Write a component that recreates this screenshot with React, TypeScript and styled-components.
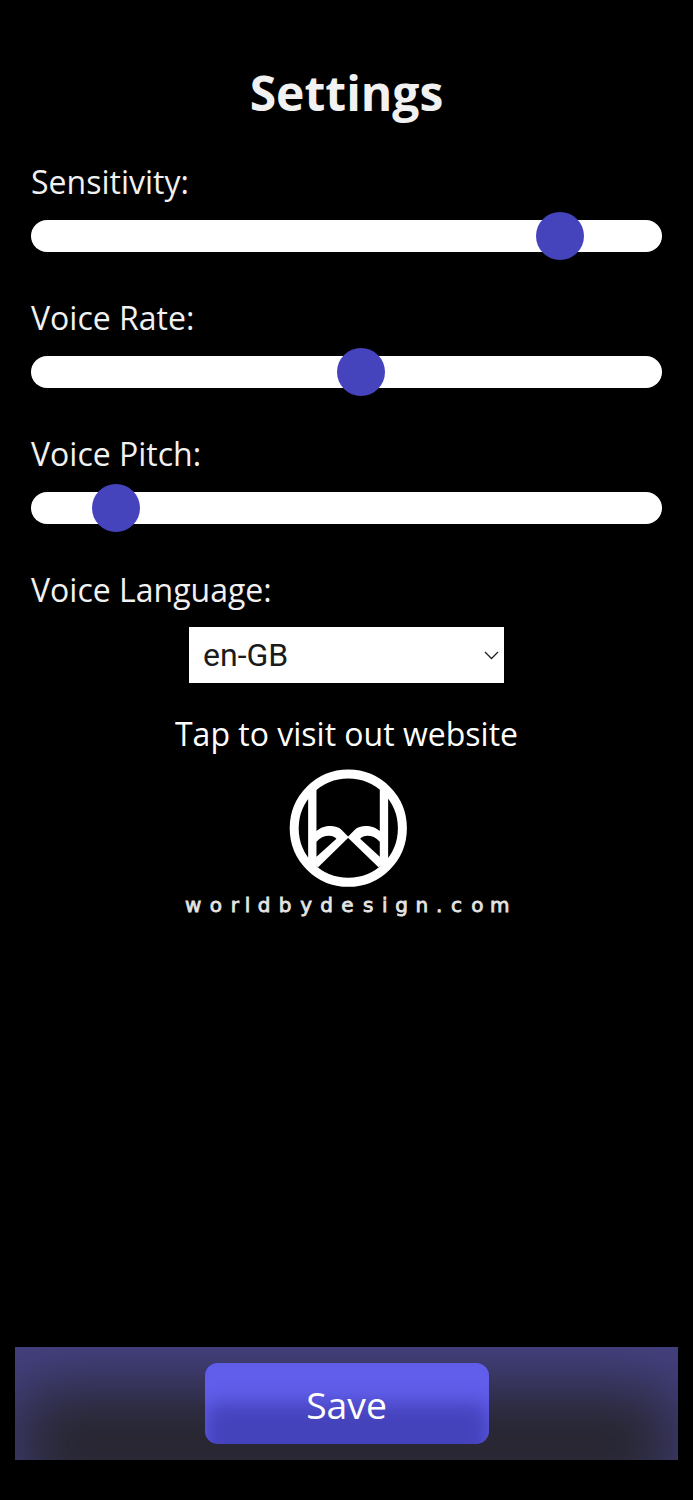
import React, { useState } from "react";
import styled, { createGlobalStyle } from "styled-components";

const GlobalStyle = createGlobalStyle`
  * { box-sizing: border-box; }
  html, body { margin: 0; background: #000; }
`;

const Screen = styled.div`
  display: flex;
  flex-direction: column;
  height: 1500px;
  padding: 58px 15px 40px;
  background: #000;
  color: #f1f1f1;
  font-family: "Open Sans", sans-serif;
  font-size: 32px;
`;

const Content = styled.main`
  flex: 1;
  display: flex;
  flex-direction: column;
  padding: 0 16px;
`;

const Title = styled.h1`
  margin: 0 0 32px;
  font-size: 48px;
  font-weight: 700;
  line-height: 70px;
  text-align: center;
`;

const Field = styled.label`
  display: block;
  height: 136px;
`;

const LabelText = styled.span`
  display: block;
  line-height: 44px;
`;

const Slider = styled.input`
  appearance: none;
  display: block;
  width: 631px;
  height: 48px;
  margin: 7.5px 0 0;
  background: transparent;

  &::-webkit-slider-runnable-track {
    height: 32px;
    border-radius: 16px;
    background: #fff;
  }

  &::-webkit-slider-thumb {
    appearance: none;
    width: 48px;
    height: 48px;
    margin-top: -8px;
    border-radius: 50%;
    background: #4644bc;
  }
`;

const SelectBox = styled.div`
  display: grid;
  align-items: center;
  align-self: center;
  width: 315px;
  height: 56px;
  margin-top: 15.4px;
  background: #fff;

  > * {
    grid-area: 1 / 1;
  }

  > svg {
    justify-self: end;
    margin-right: 5px;
    pointer-events: none;
  }
`;

const Select = styled.select`
  appearance: none;
  width: 100%;
  height: 100%;
  padding: 0 14px;
  border: 0;
  border-radius: 0;
  background: transparent;
  color: #1b1b1b;
  font: 32px Roboto, sans-serif;
`;

const SiteLink = styled.a`
  display: flex;
  flex-direction: column;
  align-items: center;
  margin-top: 29px;
  color: #fff;
  line-height: 44px;
  text-decoration: none;
`;

const Logo = styled.svg`
  display: block;
  margin-top: 9px;
`;

const Footer = styled.footer`
  display: flex;
  justify-content: center;
  align-items: center;
  height: 113px;
  background: #26252b;
  box-shadow: inset 0 40px 70px #454285;
`;

const SaveButton = styled.button`
  width: 284px;
  height: 81px;
  padding: 2px 0 0;
  border: 0;
  border-radius: 13px;
  background: #4543bc;
  box-shadow: inset 0 40px 19px #615eeb;
  color: #fff;
  font: 37.3px "Open Sans", sans-serif;
`;

const letters: [string, number][] = [
  ["w", 193.3], ["o", 216], ["r", 235], ["l", 247.7], ["d", 264.3], ["b", 285.3],
  ["y", 306.3], ["d", 326.7], ["e", 347.5], ["s", 368.3], ["i", 385], ["g", 401.7],
  ["n", 422], [".", 439.3], ["c", 456.7], ["o", 477.7], ["m", 500],
];

function RangeField({ label, initial }: { label: string; initial: number }) {
  const [value, setValue] = useState(initial);
  return (
    <Field>
      <LabelText>{label}</LabelText>
      <Slider
        type="range"
        min={0}
        max={1}
        step="any"
        value={value}
        onChange={(e) => setValue(Number(e.target.value))}
      />
    </Field>
  );
}

function SiteLogo() {
  return (
    <Logo width="341" height="160" viewBox="176.2 765 341 160" fill="#fff">
      <circle cx="348.5" cy="828.2" r="54.1" fill="none" stroke="#fff" strokeWidth="9" />
      <g transform="translate(270 760) scale(.33333)" fillRule="evenodd">
        <path d="M115 90H140V213C158 195 198 192 215 209L237 232L145 322L115 305ZM140 245V290L200 236C189 224 160 223 140 245Z" />
        <path d="M355 90H330V213C312 195 272 192 255 209L233 232L326 322L355 305ZM330 245V290L271 236C282 224 310 223 330 245Z" />
      </g>
      <text
        x={letters.map(([, x]) => x).join(" ")}
        y="912"
        textAnchor="middle"
        fontFamily="DejaVu Sans, sans-serif"
        fontSize="20"
        fill="#e4e4e4"
        stroke="#e4e4e4"
        strokeWidth=".8"
      >
        {letters.map(([char]) => char).join("")}
      </text>
    </Logo>
  );
}

export default function App() {
  return (
    <Screen>
      <GlobalStyle />
      <Content>
        <Title>Settings</Title>
        <RangeField label="Sensitivity:" initial={0.866} />
        <RangeField label="Voice Rate:" initial={0.5257} />
        <RangeField label="Voice Pitch:" initial={0.1046} />
        <LabelText>Voice Language:</LabelText>
        <SelectBox>
          <Select defaultValue="en-GB" aria-label="Voice Language">
            <option>en-GB</option>
          </Select>
          <svg width="15" height="9" viewBox="0 0 15 9" fill="none" stroke="#222" strokeWidth="1.3">
            <path d="M1 1L7.5 7.5L14 1" />
          </svg>
        </SelectBox>
        <SiteLink href="#">
          Tap to visit out website
          <SiteLogo />
        </SiteLink>
      </Content>
      <Footer>
        <SaveButton>Save</SaveButton>
      </Footer>
    </Screen>
  );
}
